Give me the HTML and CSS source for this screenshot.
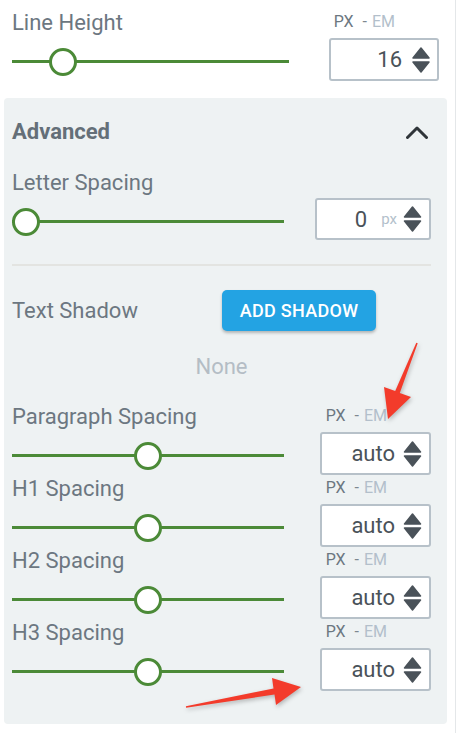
FILE: index.html
```html
<!DOCTYPE html>
<html lang="en">
<head>
    <meta charset="UTF-8">
    <meta name="viewport" content="width=device-width, initial-scale=1.0">
    <title>Typography</title>
    <link rel="stylesheet" href="styles.css">
</head>
<body>
    <div class="sidebar">
        <!-- Line Height -->
        <div class="control control-top">
            <span class="label">Line Height</span>
            <span class="units"><span>PX</span><span class="sep">-</span><span class="alt">EM</span></span>
            <div class="slider" style="--pos: 0.149"><span class="knob"></span></div>
            <div class="number">
                <span class="value">16</span>
                <svg class="spinner" width="18" height="26" viewBox="0 0 18 26"><path d="M9 1 L17 11 H1 Z"/><path d="M1 15 H17 L9 25 Z"/></svg>
            </div>
        </div>

        <!-- Advanced -->
        <section class="advanced">
            <div class="advanced-head">
                <h2>Advanced</h2>
                <svg class="chevron" width="22" height="13" viewBox="0 0 22 13"><polyline points="1.5,11.5 11,2 20.5,11.5"/></svg>
            </div>

            <div class="control control-letter">
                <span class="label">Letter Spacing</span>
                <div class="slider" style="--pos: 0"><span class="knob"></span></div>
                <div class="number">
                    <span class="value">0</span>
                    <span class="suffix">px</span>
                    <svg class="spinner" width="19" height="26" viewBox="0 0 18 26"><path d="M9 1 L17 11 H1 Z"/><path d="M1 15 H17 L9 25 Z"/></svg>
                </div>
            </div>

            <hr class="divider">

            <div class="shadow-row">
                <span class="label">Text Shadow</span>
                <button class="btn">ADD SHADOW</button>
            </div>
            <p class="none">None</p>

            <div class="control control-spacing">
                <span class="label">Paragraph Spacing</span>
                <span class="units"><span>PX</span><span class="sep">-</span><span class="alt">EM</span></span>
                <div class="slider" style="--pos: 0.5"><span class="knob"></span></div>
                <div class="number">
                    <span class="value">auto</span>
                    <svg class="spinner" width="19" height="26" viewBox="0 0 18 26"><path d="M9 1 L17 11 H1 Z"/><path d="M1 15 H17 L9 25 Z"/></svg>
                </div>
            </div>
            <div class="control control-spacing">
                <span class="label">H1 Spacing</span>
                <span class="units"><span>PX</span><span class="sep">-</span><span class="alt">EM</span></span>
                <div class="slider" style="--pos: 0.5"><span class="knob"></span></div>
                <div class="number">
                    <span class="value">auto</span>
                    <svg class="spinner" width="19" height="26" viewBox="0 0 18 26"><path d="M9 1 L17 11 H1 Z"/><path d="M1 15 H17 L9 25 Z"/></svg>
                </div>
            </div>
            <div class="control control-spacing">
                <span class="label">H2 Spacing</span>
                <span class="units"><span>PX</span><span class="sep">-</span><span class="alt">EM</span></span>
                <div class="slider" style="--pos: 0.5"><span class="knob"></span></div>
                <div class="number">
                    <span class="value">auto</span>
                    <svg class="spinner" width="19" height="26" viewBox="0 0 18 26"><path d="M9 1 L17 11 H1 Z"/><path d="M1 15 H17 L9 25 Z"/></svg>
                </div>
            </div>
            <div class="control control-spacing">
                <span class="label">H3 Spacing</span>
                <span class="units"><span>PX</span><span class="sep">-</span><span class="alt">EM</span></span>
                <div class="slider" style="--pos: 0.5"><span class="knob"></span></div>
                <div class="number">
                    <span class="value">auto</span>
                    <svg class="spinner" width="19" height="26" viewBox="0 0 18 26"><path d="M9 1 L17 11 H1 Z"/><path d="M1 15 H17 L9 25 Z"/></svg>
                </div>
            </div>
        </section>

        <!-- red annotation arrows -->
        <svg class="annotations" width="457" height="733" viewBox="0 0 457 733">
            <polygon points="416.3,342.7 417.7,343.3 399.8,392.9 411,397 388,419 384,387 395.2,391.1"/>
            <polygon points="185.9,706.2 186.1,707.8 274.5,694.5 276,705 301,687 272,678 273.5,688.5"/>
        </svg>
    </div>
</body>
</html>
```

FILE: styles.css
```css
body {
    margin: 0;
    background: #fff;
    font-family: Roboto, "Liberation Sans", Arial, sans-serif;
    color: #6c7781;
}

.sidebar {
    position: relative;
    width: 455px;
    min-height: 733px;
    border-right: 1px solid #e4e7e9;
}

.control {
    display: grid;
    justify-content: space-between;
    grid-template-rows: 26px auto;
}

.control-top {
    grid-template-columns: 277px 110px;
    padding: 10px 16px 0 12px;
}

.control-letter {
    grid-template-columns: 272px 116px;
    margin-top: 25px;
}

.control-spacing {
    grid-template-columns: 272px 111px;
    margin-bottom: 1px;
}

.label {
    font-size: 22px;
    line-height: 26px;
    white-space: nowrap;
}

.units {
    display: flex;
    justify-content: flex-end;
    padding-right: 44px;
    margin-top: 2px;
    font-size: 16px;
    line-height: 20px;
    color: #6c7781;
}

.units .sep {
    margin: 0 5px 0 9px;
    color: #7d8790;
}

.units .alt {
    color: #b3bfcb;
}

.slider {
    grid-column: 1;
    position: relative;
    height: 28px;
    margin-top: 12px;
}

.slider::before {
    content: "";
    position: absolute;
    left: 0;
    right: 0;
    top: 12px;
    height: 3px;
    background: #4b8a37;
}

.knob {
    position: absolute;
    top: 0;
    left: calc(var(--pos) * (100% - 28px));
    width: 28px;
    height: 28px;
    box-sizing: border-box;
    border: 3px solid #4b8a37;
    border-radius: 50%;
    background: #fff;
}

.number {
    grid-column: 2;
    display: flex;
    align-items: center;
    justify-content: flex-end;
    height: 43px;
    margin-top: 2px;
    padding-right: 7px;
    box-sizing: border-box;
    border: 2px solid #b7c1c9;
    border-radius: 3px;
    background: #fff;
    font-size: 22px;
    color: #4a5259;
}

.control-top .number .value {
    margin-right: 10px;
}

.control-letter .number {
    height: 42px;
}

.control-letter .value {
    margin-right: 14px;
}

.control-spacing .value {
    margin-right: 8px;
}

.suffix {
    margin-right: 6px;
    font-size: 15px;
    color: #b3bfcb;
}

.spinner path {
    fill: #4a5259;
    stroke: #4a5259;
    stroke-width: 1.5;
    stroke-linejoin: round;
}

.advanced {
    margin: 17px 8px 0 4px;
    padding: 21px 16px 32px 8px;
    background: #eef2f3;
    border-radius: 4px;
}

.advanced-head {
    display: flex;
    align-items: center;
    justify-content: space-between;
}

.advanced-head h2 {
    margin: 0;
    font-size: 22px;
    line-height: 26px;
    font-weight: 700;
    color: #646f78;
}

.chevron {
    margin-right: 3px;
}

.chevron polyline {
    fill: none;
    stroke: #2f3539;
    stroke-width: 3;
    stroke-linecap: round;
    stroke-linejoin: round;
}

.divider {
    margin: 24px 0 0;
    height: 2px;
    border: 0;
    background: #e3e4e1;
}

.shadow-row {
    display: grid;
    grid-template-columns: 210px auto;
    align-items: center;
    margin-top: 24px;
}

.btn {
    width: 154px;
    height: 41px;
    padding: 0;
    border: 0;
    border-radius: 5px;
    background: #23a3e3;
    box-shadow: 0 2px 3px rgba(0, 0, 0, 0.25);
    color: #fff;
    font-family: inherit;
    font-size: 18px;
    font-weight: 500;
    letter-spacing: 0.3px;
}

.none {
    margin: 23px 0 24px;
    text-align: center;
    font-size: 22px;
    line-height: 26px;
    color: #b4bdc5;
}

.annotations {
    position: absolute;
    top: 0;
    left: 0;
    pointer-events: none;
    filter: drop-shadow(1px 2px 2px rgba(0, 0, 0, 0.25));
}

.annotations polygon {
    fill: #f33b2b;
}
```
